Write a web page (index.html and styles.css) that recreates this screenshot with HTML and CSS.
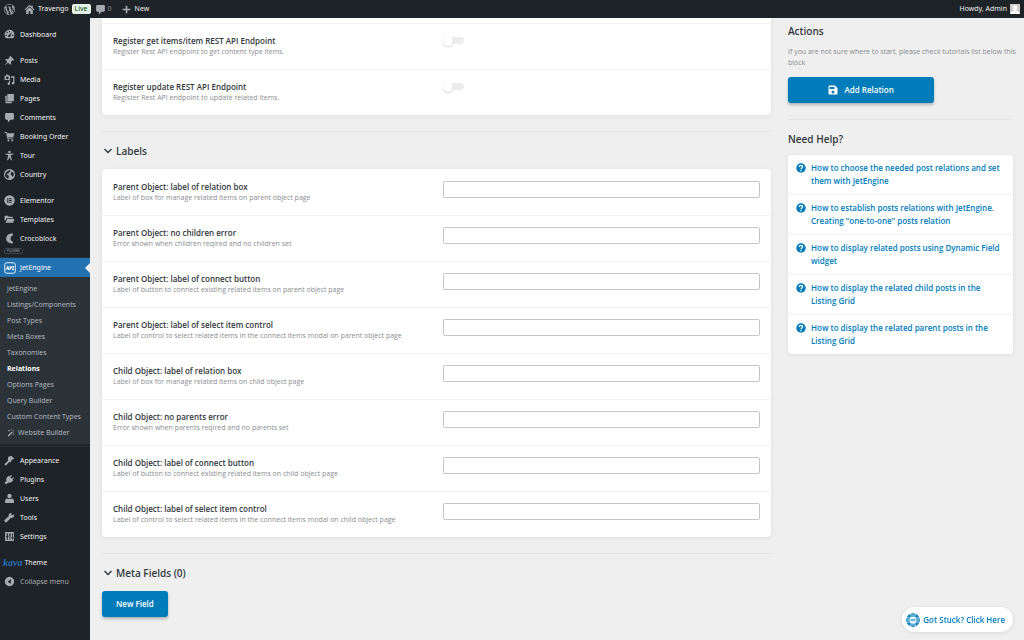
FILE: index.html
```html
<!DOCTYPE html>
<html lang="en">
<head>
<meta charset="utf-8">
<title>Add Relation</title>
<link rel="stylesheet" href="styles.css">
</head>
<body>
<svg class="sprite" aria-hidden="true">
  <symbol id="wp" viewBox="0 0 20 20"><path d="M20 10c0-5.51-4.49-10-10-10C4.48 0 0 4.49 0 10c0 5.52 4.48 10 10 10 5.51 0 10-4.48 10-10zM7.78 15.37L4.37 6.22c.55-.02 1.17-.08 1.17-.08.5-.06.44-1.13-.06-1.11 0 0-1.45.11-2.37.11-.18 0-.37 0-.58-.01C4.12 2.69 6.87 1.11 10 1.11c2.33 0 4.45.87 6.05 2.34-.68-.11-1.65.39-1.65 1.58 0 .74.45 1.36.9 2.1.35.61.55 1.36.55 2.46 0 1.49-1.4 5-1.4 5l-3.03-8.37c.54-.02.82-.17.82-.17.5-.05.44-1.25-.06-1.22 0 0-1.44.12-2.38.12-.87 0-2.33-.12-2.33-.12-.5-.03-.56 1.2-.06 1.22l.92.08 1.26 3.41zM17.41 10c.24-.64.74-1.87.43-4.25.7 1.29 1.05 2.71 1.05 4.25 0 3.29-1.73 6.24-4.4 7.78.97-2.59 1.94-5.2 2.92-7.78zM6.1 18.09C3.12 16.65 1.11 13.53 1.11 10c0-1.3.23-2.48.72-3.59C3.25 10.3 4.67 14.2 6.1 18.09zm4.03-6.63l2.58 6.98c-.86.29-1.76.45-2.71.45-.79 0-1.57-.11-2.29-.33.81-2.38 1.62-4.74 2.42-7.1z"/></symbol>
  <symbol id="home" viewBox="0 0 20 20"><path d="M10 1.5l3 2.800V3h3v4.100l3 2.800-1.300 1.400L10 4.200l-7.700 7.100L1 9.900zM10 6l6 5.500V18h-4.500v-5h-3v5H4v-6.500z"/></symbol>
  <symbol id="comment" viewBox="0 0 20 20"><path d="M4 2h12a2 2 0 0 1 2 2v8a2 2 0 0 1-2 2h-4l-5 5v-5H4a2 2 0 0 1-2-2V4a2 2 0 0 1 2-2z"/></symbol>
  <symbol id="plus" viewBox="0 0 20 20"><path d="M8.500 3h3v5.500H17v3h-5.500V17h-3v-5.500H3v-3h5.500z"/></symbol>
  <symbol id="dash" viewBox="0 0 20 20"><path fill-rule="evenodd" d="M3.800 17A9 9 0 1 1 16.200 17zM9 3.500v2.500h2V3.500zM4.300 6l1.700 1.700 1.300-1.300-1.700-1.700zM2.800 10.500v2h2.400v-2zM14.800 10.500v2h2.400v-2zM14.500 5.500L9 11a2 2 0 1 0 2.400 2.200z"/></symbol>
  <symbol id="pin" viewBox="0 0 20 20"><path d="M11.500 1.500l7 7-1.600 1.600-1.200-.4-3.200 3.200.3 3.400-1.500 1.500-3.900-3.900-5.700 4.700-.3-.3 4.700-5.700-3.900-3.900 1.500-1.500 3.400.3 3.200-3.200-.4-1.200z"/></symbol>
  <symbol id="media" viewBox="0 0 20 20"><path fill-rule="evenodd" d="M1 3h2.500l1-2h3l1 2H11v8H1zm5 1.500a2.500 2.500 0 1 0 .01 0zM12.500 4H19v12.500a2.500 2.500 0 1 1-2.200-2.400V7h-4.300zM11 12v5.500a2.300 2.300 0 1 1-2-2.200V12z"/></symbol>
  <symbol id="pages" viewBox="0 0 20 20"><path d="M7 2h11v13H6V3zM2 5h3v11h9v2.500H3z"/></symbol>
  <symbol id="cart" viewBox="0 0 20 20"><path d="M1 2h4l.8 2H19l-2.500 8H7.600l.4 1.500h9V15H6.500L3.800 3.500H1z"/><circle cx="8" cy="17.300" r="1.700"/><circle cx="15" cy="17.300" r="1.700"/></symbol>
  <symbol id="person" viewBox="0 0 20 20"><circle cx="10" cy="3.500" r="2.300"/><path d="M3 6.500l5 .2h4l5-.2v1.800l-4.500.8.3 3 1.700 6.700h-2L10 13l-2.500 5.800h-2L7.200 12l.3-2.900L3 8.300z"/></symbol>
  <symbol id="globe" viewBox="0 0 20 20"><path fill-rule="evenodd" d="M10 0a10 10 0 1 0 .01 0zM11 1.800l1 1.700-1 1.500-2 1L8 8.500 6 8 4.500 9.500l3 2 1.500 2-1.500 4A8 8 0 0 1 2 9l2.500-4zM14 5l3 1.500 1 4-2 4-1.500-2.500-2.500-1 .5-3.500z"/></symbol>
  <symbol id="elementor" viewBox="0 0 20 20"><path fill-rule="evenodd" d="M10 0.500a9.500 9.500 0 1 0 .01 0zM6 6h2v8H6zm3.300 0H14v1.600H9.300zm0 3.200H14v1.600H9.300zm0 3.200H14V14H9.300z"/></symbol>
  <symbol id="folder" viewBox="0 0 20 20"><path d="M1 3h6l2 2h7v2.500H5L2.500 12H1zM6 9h13l-2.500 7H2.500z"/></symbol>
  <symbol id="croco" viewBox="0 0 20 20"><path d="M16 1C8.500.500 4 4.500 4 10.200S8.500 19.500 16 19l.5-3c-3-1-4.500-3-4.500-6s1.500-5 4.500-6z"/></symbol>
  <symbol id="api" viewBox="0 0 24 24"><rect x="1.500" y="1.500" width="21" height="21" rx="4" fill="none" stroke="currentColor" stroke-width="1.800"/><path fill="none" stroke="currentColor" stroke-width="2" d="M4.500 16l3-8 2 8M6 13.500h3M12 16V9h2.500v3.500H12M18 8.500V16M16.500 9h3M16.500 15.500h3"/></symbol>
  <symbol id="wand" viewBox="0 0 20 20"><path d="M2 16.500L12.500 6 14.500 8 4 18.500zM14 4.500l1.500-1.500 2 2L16 6.500zM5 1l.8 2.200L8 4l-2.200.8L5 7l-.8-2.200L2 4l2.200-.8zM16.500 10l.7 1.800 1.800.7-1.800.7-.7 1.800-.7-1.800-1.800-.7 1.800-.7zM11 0l.5 1.500L13 2l-1.500.5L11 4l-.5-1.500L9 2l1.500-.5z"/></symbol>
  <symbol id="brush" viewBox="0 0 20 20"><path d="M7.500 3.500L13 1.500 19 7l-5 1.500-1.500 4.500-3-.5L4 18.500 1.500 19 1 16.500l6-5.500z"/></symbol>
  <symbol id="plug" viewBox="0 0 20 20"><path d="M13 1.500l1.500 1.500-3 3 2.700 2.700 3-3L18.700 7l-3 3 1.300 1.500c-2.500 4-6.500 5.500-9.500 4L4 19l-3-3 3.500-3.500C3 9.500 4.500 5.500 8.500 3L10 4.500z"/></symbol>
  <symbol id="user" viewBox="0 0 20 20"><circle cx="10" cy="5.500" r="4"/><path d="M2 18v-4c0-2 2-3.500 5-4 1 1.500 5 1.500 6 0 3 .5 5 2 5 4v4z"/></symbol>
  <symbol id="wrench" viewBox="0 0 20 20"><path d="M16.700 5.600l-2.600.5-.9-1 .7-2.800C11 1 7.800 3.500 8.500 7.500L1.500 14a2.600 2.600 0 1 0 4 3.900l6.800-7C16 12 19.500 8.600 18.500 4z"/></symbol>
  <symbol id="settings" viewBox="0 0 20 20"><path fill-rule="evenodd" d="M2 2h16v16H2zM5 4v5H4v2h1v5h2v-5h1V9H7V4zm5 0v2H9v2h1v8h1.500V8h1V6h-1V4zm4.500 0v7h-1v2h1v3H16v-3h1v-2h-1V4z"/></symbol>
  <symbol id="collapse" viewBox="0 0 20 20"><path fill-rule="evenodd" d="M10 1.500a8.500 8.500 0 1 0 .01 0zM12.500 6v8L6.500 10z"/></symbol>
  <symbol id="chev" viewBox="0 0 10 10"><path fill="none" stroke="currentColor" stroke-width="1.400" d="M1.500 3l3.500 3.500L8.500 3"/></symbol>
  <symbol id="save" viewBox="0 0 20 20"><path fill-rule="evenodd" d="M3 1h11l5 5v11a2 2 0 0 1-2 2H3a2 2 0 0 1-2-2V3a2 2 0 0 1 2-2zm0 3v4h10V4zm7 7a3 3 0 1 0 .01 0z"/></symbol>
  <symbol id="help" viewBox="0 0 20 20"><circle cx="10" cy="10" r="9.500"/><path fill="none" stroke="#fff" stroke-width="2.600" d="M6.800 7.800c0-4.200 6.400-4.200 6.400-.3 0 2.400-3.200 2.500-3.200 5.200"/><circle cx="10" cy="15.500" r="1.500" fill="#fff"/></symbol>
  <symbol id="buoy" viewBox="0 0 28 28"><circle cx="14" cy="14" r="10.500" fill="none" stroke="currentColor" stroke-width="6.500"/><path fill="none" stroke="#fff" stroke-width="1.300" d="M9.500 1v6.500M18.500 1v6.500M9.500 20.500V27M18.500 20.500V27M1 9.500h6.500M1 18.500h6.500M20.500 9.500H27M20.500 18.500H27"/><path fill="none" stroke="#fff" stroke-width="1.500" d="M11 4h6M11 24h6M4 11v6M24 11v6"/><path fill="none" stroke="currentColor" stroke-width="1.500" d="M9 12.500h10M9 15.500h10"/></symbol>
</svg>

<header class="topbar">
  <a href="#" class="logo" aria-label="WordPress"><svg class="icon"><use href="#wp"/></svg></a>
  <a href="#">
    <svg class="icon"><use href="#home"/></svg>Travengo <span class="live">Live</span></a>
  <a href="#" class="dim"><svg class="icon"><use href="#comment"/></svg>0</a>
  <a href="#" class="new"><svg class="icon"><use href="#plus"/></svg>New</a>
  <a href="#" class="account">Howdy, Admin
    <svg class="avatar" viewBox="0 0 20 20"><path fill="#ccc" d="M0 0h20v20H0z"/><g fill="#fff"><ellipse cx="10" cy="8" rx="4.500" ry="5.500"/><path d="M1 20c0-5 4-6 9-6s9 1 9 6z"/></g></svg></a>
</header>

<div class="shell">
  <nav class="sidebar" aria-label="Main menu">
    <ul class="menu">
      <li><a href="#"><svg class="icon"><use href="#dash"/></svg>Dashboard</a></li>
    </ul>
    <ul class="menu">
      <li><a href="#"><svg class="icon"><use href="#pin"/></svg>Posts</a></li>
      <li><a href="#"><svg class="icon"><use href="#media"/></svg>Media</a></li>
      <li><a href="#"><svg class="icon"><use href="#pages"/></svg>Pages</a></li>
      <li><a href="#"><svg class="icon"><use href="#comment"/></svg>Comments</a></li>
      <li><a href="#"><svg class="icon"><use href="#cart"/></svg>Booking Order</a></li>
      <li><a href="#"><svg class="icon"><use href="#person"/></svg>Tour</a></li>
      <li><a href="#"><svg class="icon"><use href="#globe"/></svg>Country</a></li>
    </ul>
    <ul class="menu">
      <li><a href="#"><svg class="icon"><use href="#elementor"/></svg>Elementor</a></li>
      <li><a href="#"><svg class="icon"><use href="#folder"/></svg>Templates</a></li>
      <li><a href="#"><svg class="icon"><use href="#croco"/></svg>Crocoblock</a></li>
    </ul>
    <div class="group-tag"><span>PLUGINS</span></div>
    <a href="#" class="current"><svg class="icon"><use href="#api"/></svg>JetEngine</a>
    <ul class="submenu">
      <li><a href="#">JetEngine</a></li>
      <li><a href="#">Listings/Components</a></li>
      <li><a href="#">Post Types</a></li>
      <li><a href="#">Meta Boxes</a></li>
      <li><a href="#">Taxonomies</a></li>
      <li><a href="#" class="active" aria-current="page">Relations</a></li>
      <li><a href="#">Options Pages</a></li>
      <li><a href="#">Query Builder</a></li>
      <li><a href="#">Custom Content Types</a></li>
      <li><a href="#"><svg class="wand"><use href="#wand"/></svg>Website Builder</a></li>
    </ul>
    <ul class="menu after">
      <li><a href="#"><svg class="icon"><use href="#brush"/></svg>Appearance</a></li>
      <li><a href="#"><svg class="icon"><use href="#plug"/></svg>Plugins</a></li>
      <li><a href="#"><svg class="icon"><use href="#user"/></svg>Users</a></li>
      <li><a href="#"><svg class="icon"><use href="#wrench"/></svg>Tools</a></li>
      <li><a href="#"><svg class="icon"><use href="#settings"/></svg>Settings</a></li>
    </ul>
    <ul class="menu">
      <li><a href="#" class="theme"><span class="kava">kava</span>Theme</a></li>
      <li><button type="button" class="collapse"><svg class="icon"><use href="#collapse"/></svg>Collapse menu</button></li>
    </ul>
  </nav>

  <div class="content">
    <main>
      <section class="card clipped">
        <div class="row">
          <label for="get"><b>Register get items/item REST API Endpoint</b><span>Register Rest API endpoint to get content type items.</span></label>
          <input type="checkbox" class="switch" id="get">
        </div>
        <div class="row">
          <label for="upd"><b>Register update REST API Endpoint</b><span>Register Rest API endpoint to update related items.</span></label>
          <input type="checkbox" class="switch" id="upd">
        </div>
      </section>

      <hr>
      <h2><button type="button" class="toggle"><svg class="chev"><use href="#chev"/></svg>Labels</button></h2>
      <section class="card">
        <div class="row"><label for="f1"><b>Parent Object: label of relation box</b><span>Label of box for manage related items on parent object page</span></label><input type="text" id="f1"></div>
        <div class="row"><label for="f2"><b>Parent Object: no children error</b><span>Error shown when children reqired and no children set</span></label><input type="text" id="f2"></div>
        <div class="row"><label for="f3"><b>Parent Object: label of connect button</b><span>Label of button to connect existing related items on parent object page</span></label><input type="text" id="f3"></div>
        <div class="row"><label for="f4"><b>Parent Object: label of select item control</b><span>Label of control to select related items in the connect items modal on parent object page</span></label><input type="text" id="f4"></div>
        <div class="row"><label for="f5"><b>Child Object: label of relation box</b><span>Label of box for manage related items on child object page</span></label><input type="text" id="f5"></div>
        <div class="row"><label for="f6"><b>Child Object: no parents error</b><span>Error shown when parents reqired and no parents set</span></label><input type="text" id="f6"></div>
        <div class="row"><label for="f7"><b>Child Object: label of connect button</b><span>Label of button to connect existing related items on child object page</span></label><input type="text" id="f7"></div>
        <div class="row"><label for="f8"><b>Child Object: label of select item control</b><span>Label of control to select related items in the connect items modal on child object page</span></label><input type="text" id="f8"></div>
      </section>

      <hr>
      <h2><button type="button" class="toggle"><svg class="chev"><use href="#chev"/></svg>Meta Fields (0)</button></h2>
      <button type="button" class="primary">New Field</button>
    </main>

    <aside>
      <h2>Actions</h2>
      <p class="note">If you are not sure where to start, please check tutorials list below this block</p>
      <button type="button" class="primary wide"><svg class="save"><use href="#save"/></svg>Add Relation</button>
      <hr>
      <h2>Need Help?</h2>
      <ul class="card help">
        <li><svg><use href="#help"/></svg><a href="#">How to choose the needed post relations and set them with JetEngine</a></li>
        <li><svg><use href="#help"/></svg><a href="#">How to establish posts relations with JetEngine. Creating "one-to-one" posts relation</a></li>
        <li><svg><use href="#help"/></svg><a href="#">How to display related posts using Dynamic Field widget</a></li>
        <li><svg><use href="#help"/></svg><a href="#">How to display the related child posts in the Listing Grid</a></li>
        <li><svg><use href="#help"/></svg><a href="#">How to display the related parent posts in the Listing Grid</a></li>
      </ul>
    </aside>
  </div>
</div>

<button type="button" class="stuck"><svg><use href="#buoy"/></svg>Got Stuck? Click Here</button>
</body>
</html>
```

FILE: styles.css
```css
* { box-sizing: border-box; }

:root {
  --text: "Open Sans", "Noto Sans", sans-serif;
  --menu: "Noto Sans", "Open Sans", sans-serif;
  --blue: #007cba;
  --dark: #1d2327;
  --ink: #32373c;
}

body {
  margin: 0;
  min-height: 100vh;
  display: flex;
  flex-direction: column;
  background: #efefef;
  color: var(--ink);
  font: 7px/10px var(--text);
}

a { color: inherit; text-decoration: none; }
ul { list-style: none; margin: 0; padding: 0; }
button, input { font: inherit; color: inherit; margin: 0; }
button { border: 0; background: none; cursor: pointer; }
svg { fill: currentColor; flex: none; }
.sprite { position: absolute; width: 0; height: 0; }
.icon { width: 11px; height: 11px; color: #a7aaad; }

/* Admin bar */
.topbar {
  display: flex;
  align-items: center;
  gap: 4px;
  height: 18px;
  padding: 0 4px;
  background: var(--dark);
  color: #f0f0f1;
  font-family: var(--menu);
}
.topbar a { display: flex; align-items: center; gap: 3px; }
.topbar .logo { margin-right: 5px; }
.topbar .new { margin-left: 5px; }
.topbar .dim { gap: 2px; color: #8c8f94; }
.topbar .account { margin-left: auto; }
.live {
  padding: 0 3px;
  border-radius: 2px;
  background: #e6f2e8;
  color: #00450c;
}
.avatar { width: 10px; height: 10px; }

.shell { display: flex; flex: 1; }

/* Sidebar */
.sidebar {
  flex: 0 0 90px;
  padding-top: 7px;
  background: var(--dark);
  color: #f0f0f1;
  font-family: var(--menu);
}
.menu { margin-bottom: 7px; }
.menu a, .collapse, .current {
  display: flex;
  align-items: center;
  gap: 5px;
  width: 100%;
  height: 19px;
  padding: 0 4px;
  white-space: nowrap;
}
.group-tag {
  display: flex;
  margin-top: -7px;
  height: 10px;
  padding: 0 4px;
  border-bottom: 1px solid #2c3338;
}
.group-tag span {
  height: 6px;
  padding: 0 2px;
  border: 1px solid #3c434a;
  border-radius: 2px;
  color: #a7aaad;
  font-size: 3px;
  line-height: 4px;
}
.current { position: relative; background: #2271b1; color: #fff; }
.current .icon { width: 12px; height: 12px; color: #fff; margin-right: -1px; }
.current::after {
  content: "";
  position: absolute;
  right: 0;
  top: 5px;
  border: 5px solid transparent;
  border-left-width: 0;
  border-right-color: #efefef;
}
.submenu {
  padding: 4px 0 3px;
  background: #2c3338;
  color: #b5bcc2;
  font-family: var(--text);
}
.submenu a {
  display: flex;
  align-items: center;
  gap: 3px;
  height: 16px;
  padding-left: 7px;
  white-space: nowrap;
}
.submenu .active { color: #fff; font-weight: 700; }
.wand { width: 8px; height: 8px; }
.after { margin-top: 2px; padding-top: 4px; border-top: 1px solid #2c3338; }
.collapse { color: #a7aaad; }
.theme .kava {
  color: #2a6db5;
  font: italic bold 10px/12px "Liberation Serif", serif;
}
.menu .theme { gap: 2px; padding-left: 3px; }

/* Content */
.content {
  flex: 1;
  display: grid;
  grid-template-columns: minmax(0, 3fr) minmax(225px, 1fr);
  gap: 17px;
  padding: 0 11px 22px 12px;
}
.card {
  background: #fff;
  border-radius: 4px;
  box-shadow: 0 1px 4px rgba(35, 40, 45, .08);
}
.clipped { padding-top: 5px; border-radius: 0 0 4px 4px; }
.row {
  display: grid;
  grid-template-columns: 51% 49%;
  align-items: start;
  height: 46px;
  padding: 12px 11px 0;
}
.row + .row, .clipped .row { padding-top: 11px; border-top: 1px solid #f3f3f4; }
.row b { display: block; font-size: 8px; line-height: 12px; font-weight: 600; }
.row span { display: block; color: #8a8d91; }
.row input[type="text"] {
  width: 100%;
  height: 17px;
  padding: 0 4px;
  border: 1px solid #c4c6c9;
  border-radius: 2px;
  background: #fff;
}
.switch {
  appearance: none;
  display: flex;
  align-items: center;
  width: 21px;
  height: 7px;
  margin-top: 2px;
  border-radius: 4px;
  background: #ececec;
}
.switch::before {
  content: "";
  flex: none;
  width: 10px;
  height: 10px;
  border-radius: 50%;
  background: #fff;
  box-shadow: 0 1px 2px rgba(35, 40, 45, .2);
}
hr { height: 1px; margin: 16px 0 0; border: 0; background: #e5e5e5; }
h2 { margin: 0; font-size: 10px; line-height: 14px; font-weight: 600; }
main h2 { padding: 12px 0 11px; }
.toggle { display: flex; align-items: center; gap: 3px; padding: 0 0 0 1px; font-weight: 600; }
.chev { width: 10px; height: 10px; }
.primary {
  display: flex;
  align-items: center;
  justify-content: center;
  gap: 6px;
  height: 26px;
  padding: 0 14px;
  border-radius: 3px;
  background: var(--blue);
  box-shadow: 0 2px 3px rgba(35, 40, 45, .3);
  color: #fff;
  font-size: 8px;
  font-weight: 600;
}
.wide { width: 65%; }
.save { width: 10px; height: 10px; }
aside { padding-top: 6px; }
.note { margin: 8px -8px 9px 0; color: #8a8d91; line-height: 11px; }
aside hr { margin-bottom: 12px; }
.help { margin-top: 9px; }
.help li {
  display: flex;
  align-items: start;
  gap: 5px;
  padding: 6px 8px 7px;
  color: var(--blue);
  font-size: 8px;
  line-height: 13px;
  font-weight: 600;
}
.help li + li { border-top: 1px solid #f3f3f4; }
.help svg { width: 10px; height: 10px; margin-top: 2px; }

.stuck {
  position: fixed;
  right: 11px;
  bottom: 8px;
  display: flex;
  align-items: center;
  gap: 3px;
  height: 25px;
  padding: 0 8px 0 4px;
  border-radius: 13px;
  background: #fff;
  box-shadow: 0 1px 4px rgba(35, 40, 45, .1);
  color: var(--blue);
  font-size: 8px;
  font-weight: 600;
}
.stuck svg { width: 14px; height: 14px; }
```
